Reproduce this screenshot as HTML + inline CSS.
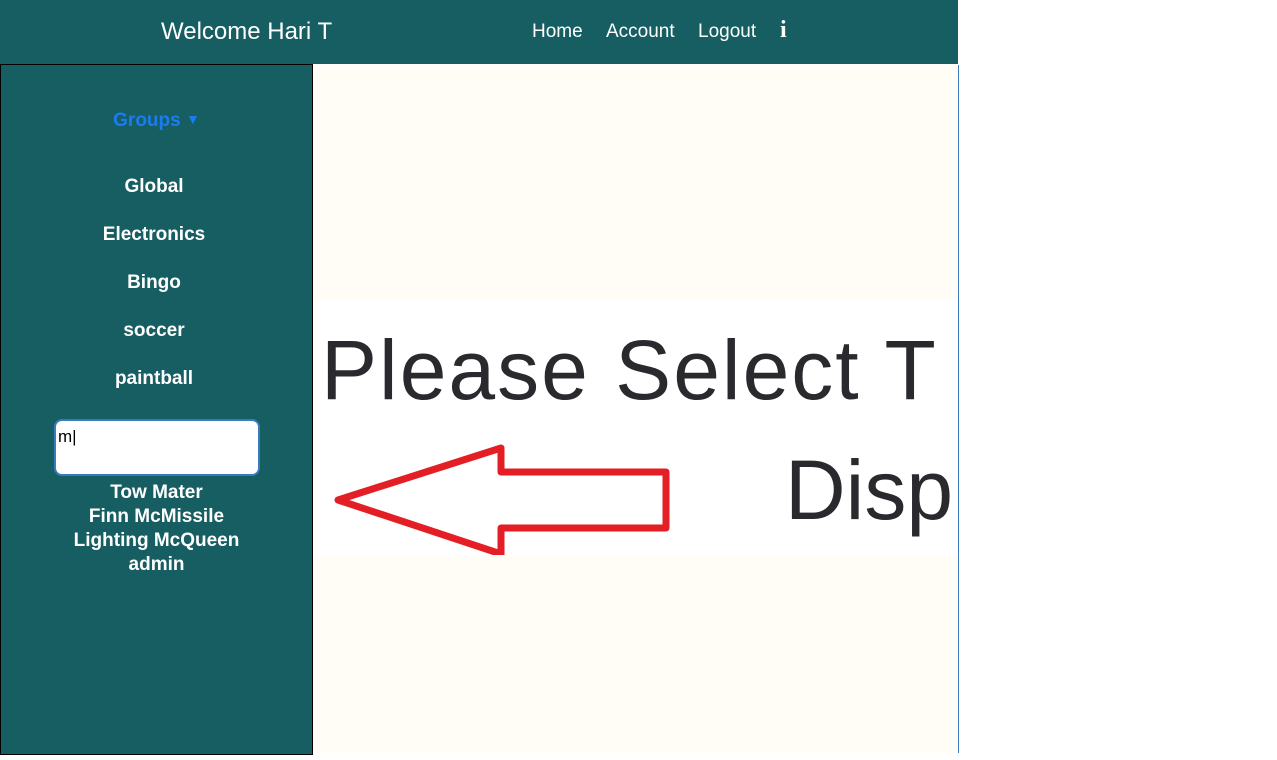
<!DOCTYPE html>
<html><head><style>
body{margin:0;width:1277px;height:760px;background:#fff;position:relative;font-family:"Liberation Sans",sans-serif;overflow:hidden}
#hdr{position:absolute;left:0;top:0;width:958px;height:64px;background:#175e63;color:#fff}
#side{position:absolute;left:0;top:64px;width:311px;height:689px;background:#175e63;border:1px solid #000;border-top:1px solid #000}
#main{position:absolute;left:313px;top:65px;width:645px;height:688px;background:#fffdf6;border-right:1px solid #3a7bbf}
.c{position:absolute;text-align:center;color:#fff;font-weight:bold;font-size:19px}
</style></head><body>
<div id="hdr">
<div style="position:absolute;left:161px;top:18px;font-size:24px">Welcome Hari T</div>
<div style="position:absolute;left:532px;top:21px;font-size:19px">Home</div>
<div style="position:absolute;left:606px;top:21px;font-size:19px">Account</div>
<div style="position:absolute;left:698px;top:21px;font-size:19px">Logout</div>
<div style="position:absolute;left:780px;top:17px;font-size:24px;font-weight:bold;font-family:'Liberation Serif',serif">i</div>
</div>
<div id="side">
<div class="c" style="left:0;width:311px;top:45px;color:#1a7cf0">Groups <span style="font-size:14px;vertical-align:2px">▼</span></div>
<div class="c" style="left:0;width:306px;top:111px">Global</div>
<div class="c" style="left:0;width:306px;top:159px">Electronics</div>
<div class="c" style="left:0;width:306px;top:207px">Bingo</div>
<div class="c" style="left:0;width:306px;top:255px">soccer</div>
<div class="c" style="left:0;width:306px;top:303px">paintball</div>
<div style="position:absolute;left:53px;top:354px;width:206px;height:57px;background:#fff;border:2px solid #3a7bbf;border-radius:8px;font-size:17px;padding:6px 2px;box-sizing:border-box">m|</div>
<div class="c" style="left:0;width:311px;top:416px;line-height:24px">Tow Mater<br>Finn McMissile<br>Lighting McQueen<br>admin</div>
</div>
<div id="main">
<div style="position:absolute;left:0;top:235px;width:645px;height:255px;background:#fff;overflow:hidden">
<div style="position:absolute;left:8px;top:22px;font-size:84px;color:#2a2a2e;white-space:nowrap;letter-spacing:2px">Please Select T</div>
<div style="position:absolute;left:472px;top:142px;font-size:84px;color:#2a2a2e;white-space:nowrap">Disp</div>
<svg style="position:absolute;left:0;top:0" width="645" height="255"><polygon points="25,200 188,148 188,172 353,172 353,228 188,228 188,254" fill="none" stroke="#e31e25" stroke-width="7" stroke-linejoin="round"/></svg>
</div>
</div>
</body></html>
